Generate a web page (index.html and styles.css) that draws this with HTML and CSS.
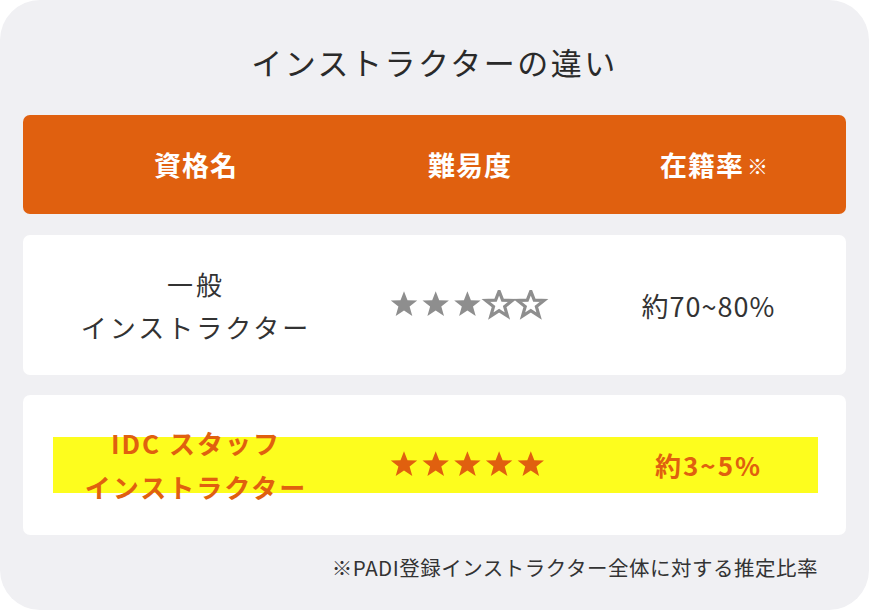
FILE: index.html
```html
<!DOCTYPE html>
<html lang="ja">
<head>
<meta charset="utf-8">
<link rel="stylesheet" href="styles.css">
</head>
<body>
<div class="card">
  <h2 class="title">インストラクターの違い</h2>
  <div class="row head">
    <div class="cell">資格名</div>
    <div class="cell">難易度</div>
    <div class="cell">在籍率<span class="mark">※</span></div>
  </div>
  <div class="row body">
    <div class="cell name">一般<br>インストラクター</div>
    <div class="cell">
      <svg class="stars gray" viewBox="0 0 160 30" width="160" height="30">
        <defs><polygon id="st" points="14,1.2 17.5,10.2 27.2,10.5 19.6,16.6 22.3,26 14,20.6 5.7,26 8.4,16.6 0.8,10.5 10.5,10.2"/></defs>
        <use href="#st" x="0" class="f"/>
        <use href="#st" x="31.7" class="f"/>
        <use href="#st" x="63.4" class="f"/>
        <use href="#st" x="95.1" class="o"/>
        <use href="#st" x="126.8" class="o"/>
      </svg>
    </div>
    <div class="cell rate">約70~80%</div>
  </div>
  <div class="row body hl">
    <div class="cell name">IDC スタッフ<br>インストラクター</div>
    <div class="cell">
      <svg class="stars orange" viewBox="0 0 160 30" width="160" height="30">
        <use href="#st" x="0" class="f"/>
        <use href="#st" x="31.7" class="f"/>
        <use href="#st" x="63.4" class="f"/>
        <use href="#st" x="95.1" class="f"/>
        <use href="#st" x="126.8" class="f"/>
      </svg>
    </div>
    <div class="cell rate">約3~5%</div>
  </div>
  <p class="note">※PADI登録インストラクター全体に対する推定比率</p>
</div>
</body>
</html>
```
FILE: styles.css
```css
html, body {
  margin: 0;
  padding: 0;
  background: #ffffff;
}
body {
  font-family: "Noto Sans CJK JP", "Noto Sans", sans-serif;
  color: #333333;
}
.card {
  width: 869px;
  height: 610px;
  box-sizing: border-box;
  background: #f0f0f3;
  border-radius: 40px;
  padding: 0 23px;
  overflow: hidden;
}
.title {
  margin: 0;
  padding-top: 40px;
  height: 115px;
  box-sizing: border-box;
  text-align: center;
  font-size: 31px;
  line-height: 44px;
  font-weight: 400;
  letter-spacing: 2.5px;
  color: #2a2a2a;
}
.row {
  display: grid;
  grid-template-columns: 346px 202px 275px;
  align-items: center;
  border-radius: 7px;
}
.cell {
  text-align: center;
  display: flex;
  justify-content: center;
  align-items: center;
}
.head {
  height: 99px;
  background: #e0600f;
  color: #ffffff;
  font-weight: 700;
  font-size: 27px;
  letter-spacing: 1px;
}
.head .cell:last-child {
  padding-left: 12px;
}
.head .mark {
  font-size: 21px;
  font-weight: 400;
  margin-left: 3px;
}
.body {
  height: 140px;
  background: #ffffff;
  margin-top: 21px;
  font-size: 26px;
  line-height: 43px;
}
.body + .body {
  margin-top: 20px;
}
.name {
  letter-spacing: 3px;
}
.rate {
  font-size: 27px;
  letter-spacing: 1px;
}
.hl {
  background: linear-gradient(#fdfd1e, #fdfd1e) no-repeat, #ffffff;
  background-size: 765px 56px, auto;
  background-position: 30px 42px, 0 0;
  color: #e0600f;
  font-weight: 700;
  line-height: 44px;
}
.hl .name {
  letter-spacing: 2px;
}
.hl .rate {
  font-size: 26px;
  letter-spacing: 2px;
}
.stars .f { fill: currentColor; }
.stars .o { fill: none; stroke: currentColor; stroke-width: 3.2; stroke-linejoin: miter; }
.stars.gray { color: #8e8e8e; }
.stars.orange { color: #e0600f; }
.note {
  margin: 19px 28px 0 0;
  text-align: right;
  font-size: 20.5px;
  line-height: 26px;
  letter-spacing: 0.5px;
  color: #333333;
}
```
